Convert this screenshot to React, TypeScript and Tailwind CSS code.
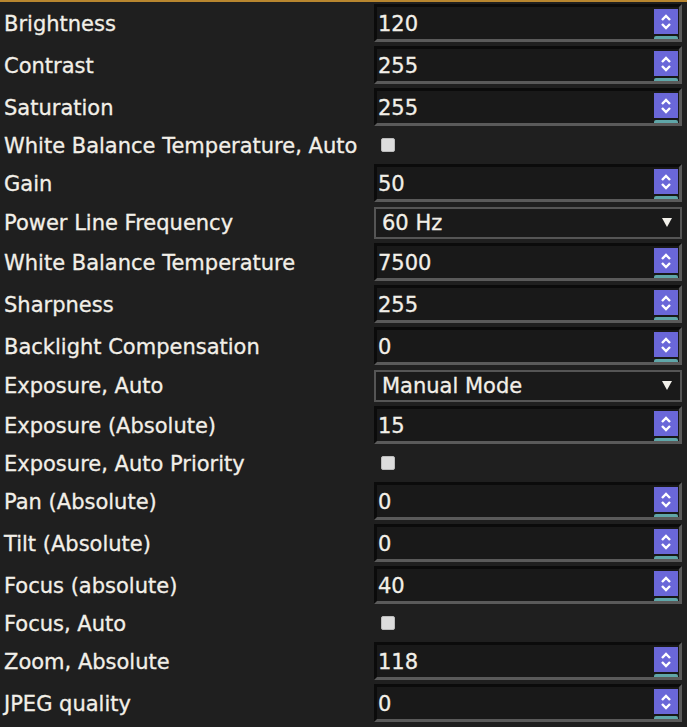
type Row =
  | { label: string; kind: 'number'; value: string }
  | { label: string; kind: 'select'; value: string }
  | { label: string; kind: 'check' }

const rows: Row[] = [
  { label: 'Brightness', kind: 'number', value: '120' },
  { label: 'Contrast', kind: 'number', value: '255' },
  { label: 'Saturation', kind: 'number', value: '255' },
  { label: 'White Balance Temperature, Auto', kind: 'check' },
  { label: 'Gain', kind: 'number', value: '50' },
  { label: 'Power Line Frequency', kind: 'select', value: '60 Hz' },
  { label: 'White Balance Temperature', kind: 'number', value: '7500' },
  { label: 'Sharpness', kind: 'number', value: '255' },
  { label: 'Backlight Compensation', kind: 'number', value: '0' },
  { label: 'Exposure, Auto', kind: 'select', value: 'Manual Mode' },
  { label: 'Exposure (Absolute)', kind: 'number', value: '15' },
  { label: 'Exposure, Auto Priority', kind: 'check' },
  { label: 'Pan (Absolute)', kind: 'number', value: '0' },
  { label: 'Tilt (Absolute)', kind: 'number', value: '0' },
  { label: 'Focus (absolute)', kind: 'number', value: '40' },
  { label: 'Focus, Auto', kind: 'check' },
  { label: 'Zoom, Absolute', kind: 'number', value: '118' },
  { label: 'JPEG quality', kind: 'number', value: '0' },
]

function Spinner() {
  return (
    <div className="flex flex-col self-stretch w-[24px] mr-[1px]">
      <div className="mt-[2px] h-[26px] bg-[#6a67d8] flex items-center justify-center">
        <svg width="12" height="18" viewBox="0 0 12 18">
          <path d="M2 7 L6 3 L10 7" stroke="#fff" strokeWidth="2.4" fill="none" />
          <path d="M2 11 L6 15 L10 11" stroke="#fff" strokeWidth="2.4" fill="none" />
        </svg>
      </div>
      <div className="mt-[2px] h-[3px] bg-[#5fa6a8] rounded-t-[2px]" />
    </div>
  )
}

function NumberField({ value }: { value: string }) {
  return (
    <div className="flex h-[38px] items-stretch border-[3px] border-t-[#0b0b0b] border-l-[#0b0b0b] border-b-[#5a5a5a] border-r-[#5a5a5a] bg-[#191919]">
      <div className="flex-1 flex items-center pl-[1px] pt-[4px]">{value}</div>
      <Spinner />
    </div>
  )
}

function SelectField({ value }: { value: string }) {
  return (
    <div className="flex h-[32px] items-center justify-between border-2 border-[#555] bg-[#1a1a1a] pl-[6px] pr-[8px]">
      <span className="pt-[2px]">{value}</span>
      <svg width="10" height="9" viewBox="0 0 10 9">
        <path d="M0 0 H10 L5 9 Z" fill="#f2f0ea" />
      </svg>
    </div>
  )
}

export default function App() {
  return (
    <div
      className="w-[687px] h-[727px] overflow-hidden bg-[#1f1f1f] border-t-2 border-[#b8862f] text-[#f2efe8] text-[21px] [-webkit-text-stroke:0.3px_#f2efe8]"
      style={{ fontFamily: '"DejaVu Sans", Verdana, sans-serif' }}
    >
      {rows.map((r) => (
        <div
          key={r.label}
          className={`flex items-center ${r.kind === 'number' ? 'h-[42px]' : r.kind === 'select' ? 'h-[37px]' : 'h-[34px]'}`}
        >
          <div className="w-[374px] pl-[4px] pt-[3px] whitespace-nowrap">{r.label}</div>
          <div className="w-[308px]">
            {r.kind === 'number' && <NumberField value={r.value} />}
            {r.kind === 'select' && <SelectField value={r.value} />}
            {r.kind === 'check' && (
              <div className="ml-[7px] mb-[1px] w-[14px] h-[14px] rounded-[2px] bg-[#dcdcdc] border border-[#bbb]" />
            )}
          </div>
        </div>
      ))}
    </div>
  )
}
